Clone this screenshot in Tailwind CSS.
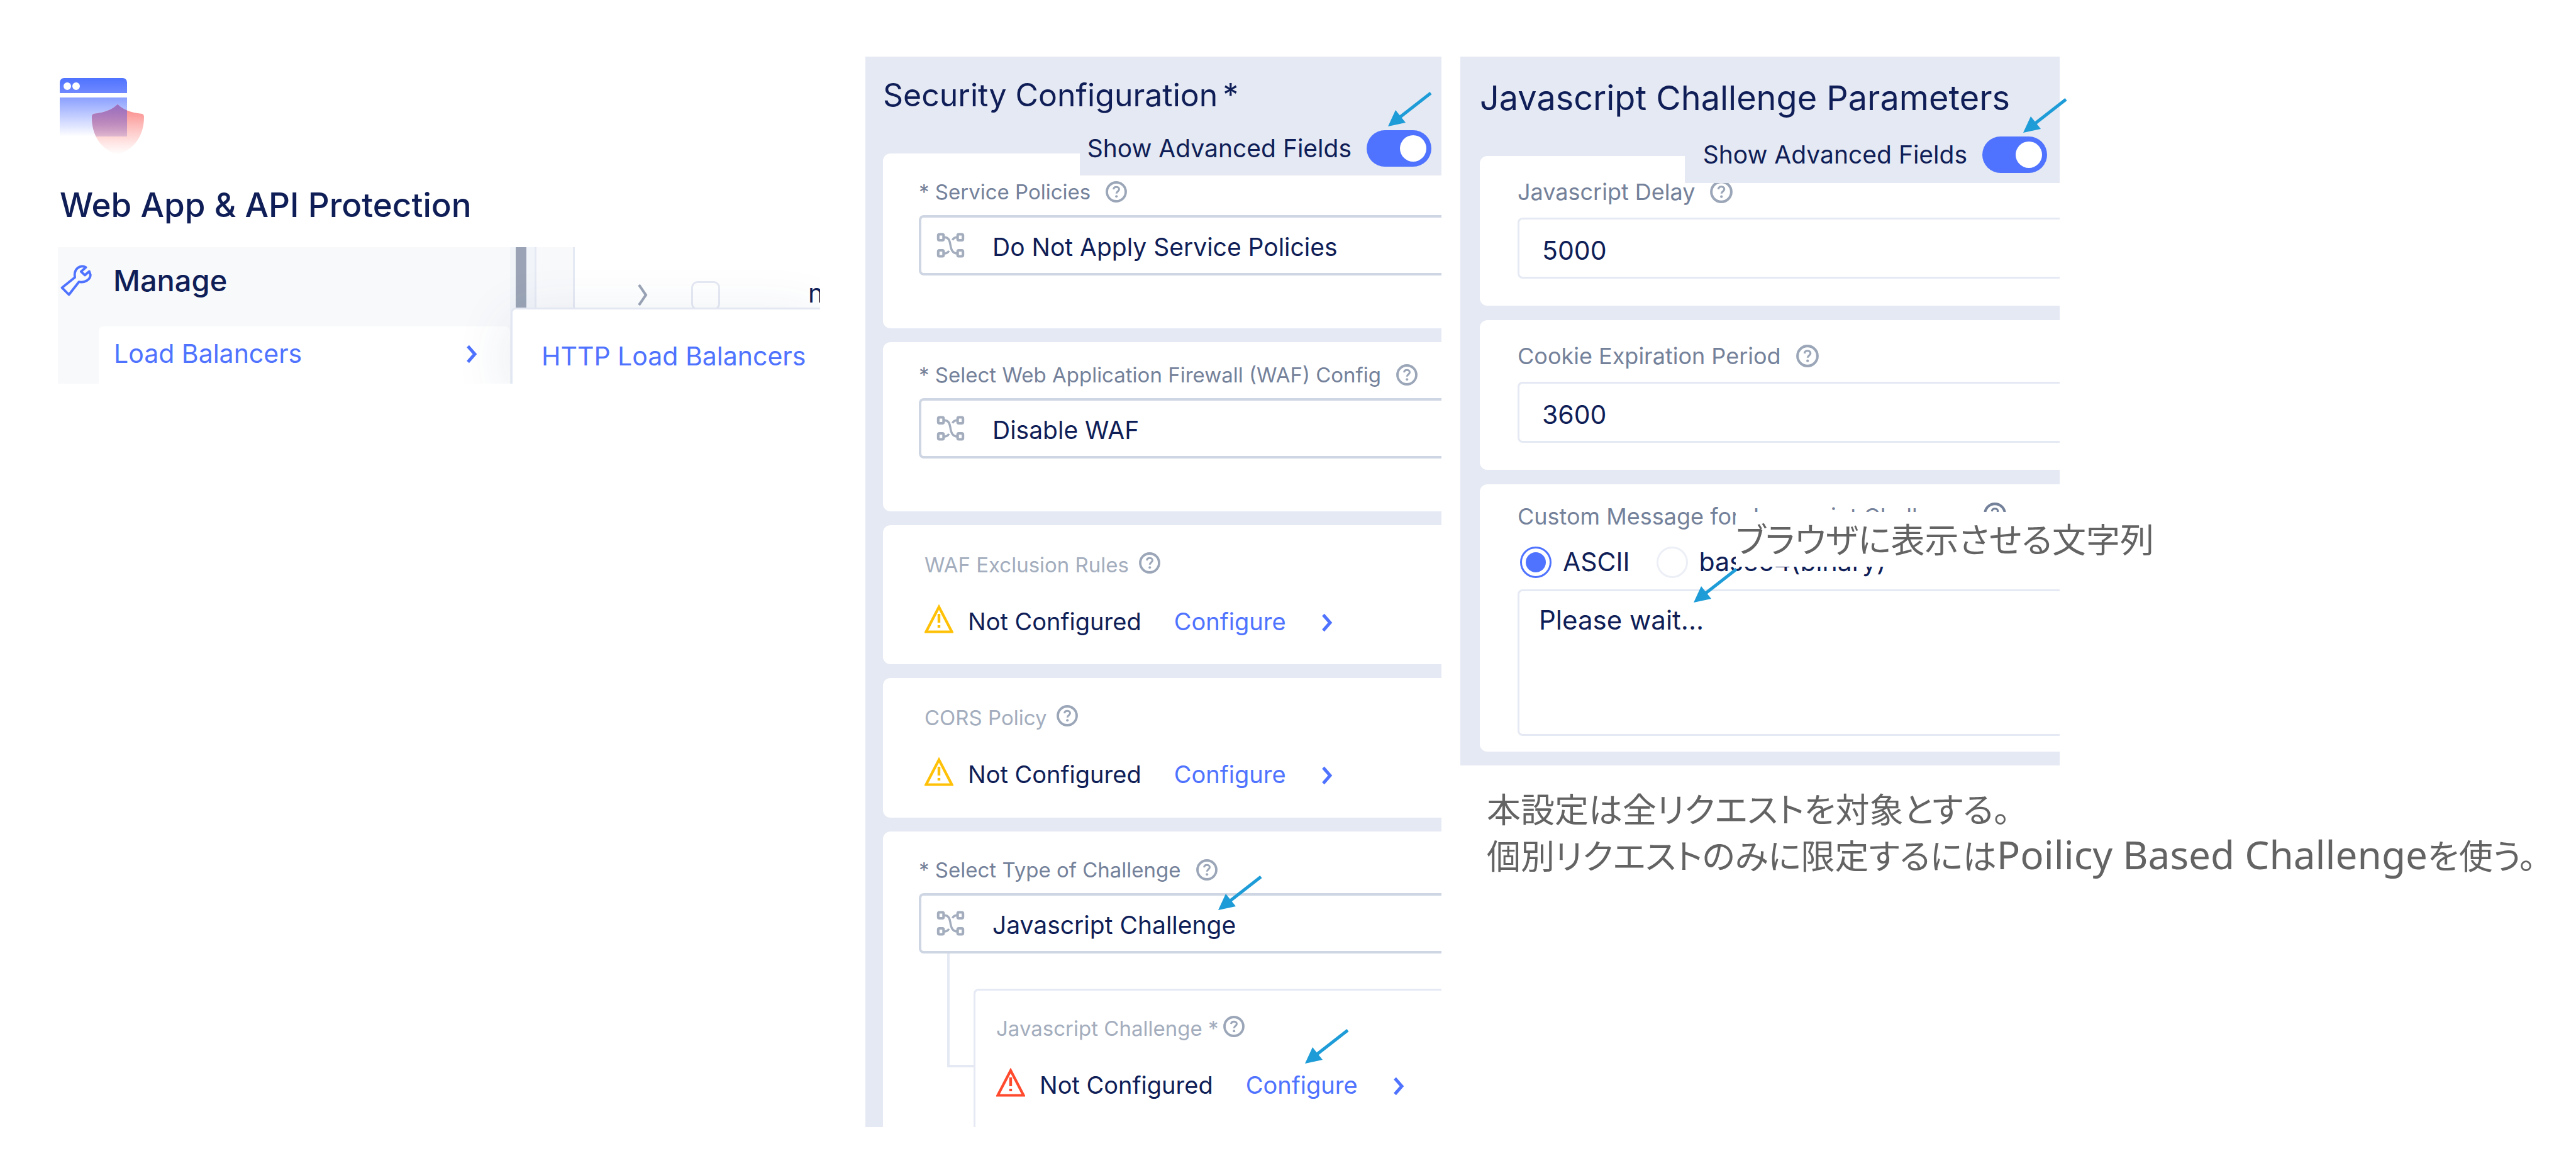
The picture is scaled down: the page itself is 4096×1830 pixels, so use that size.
<!DOCTYPE html>
<html lang="ja">
<head>
<meta charset="utf-8">
<meta name="viewport" content="width=device-width, initial-scale=1">
<title>Web App &amp; API Protection</title>
<script src="https://cdn.jsdelivr.net/npm/@tailwindcss/browser@4"></script>
</head>
<body class="bg-white font-['Inter','Noto_Sans_CJK_JP',sans-serif] text-[#0f1e57]">

<svg class="hidden" aria-hidden="true">
  <symbol id="help" viewBox="0 0 34 34">
    <circle cx="17" cy="17" r="15" fill="none" stroke="currentColor" stroke-width="3.8"/>
    <path d="M12.5 13.2c.3-2.700 2.100-4 4.500-4s4.500 1.500 4.500 3.900c0 3-4.300 3.300-4.300 6.600" fill="none" stroke="currentColor" stroke-width="3"/>
    <circle cx="17.200" cy="24.300" r="2" fill="currentColor"/>
  </symbol>
  <symbol id="branch" viewBox="100 295 143 127">
    <g fill="none" stroke="currentColor" stroke-width="13">
      <rect x="109" y="303" width="27" height="30" rx="6"/>
      <rect x="207" y="303" width="27" height="30" rx="6"/>
      <rect x="109" y="384" width="27" height="30" rx="6"/>
      <rect x="207" y="384" width="27" height="30" rx="6"/>
      <path stroke-width="11" d="M138 318c22 0 28 12 32 36 4 26 10 45 36 46M206 318c-12 0-20 4-25 14M138 400c12 0 20-4 25-14"/>
    </g>
  </symbol>
  <symbol id="warn" viewBox="0 0 46 46">
    <path d="M23 4 43.500 43.500H2.500Z" fill="none" stroke="currentColor" stroke-width="4.200"/>
    <path d="M23 15v14M23 33v4" stroke="currentColor" stroke-width="4.400"/>
  </symbol>
  <symbol id="chevron" viewBox="0 0 18 30">
    <path d="M3 2.500 14 15 3 27.500" fill="none" stroke="currentColor" stroke-width="5"/>
  </symbol>
  <symbol id="arrow" viewBox="0 0 70 56">
    <path d="M68 2 18 41" stroke="#1e9cd7" stroke-width="5"/>
    <path d="M0 55 12 29 28 49Z" fill="#1e9cd7"/>
  </symbol>
</svg>

<main class="grid min-h-screen grid-cols-[1376fr_946fr_1774fr] items-start pt-[90px]">

  <!-- Navigation -->
  <section class="min-w-0 pt-[34px] pr-[72px] pl-[92px]">
    <svg class="ml-[3px] h-[124px] w-[136px]" viewBox="0 0 136 124" role="img" aria-label="Web App and API Protection">
      <defs>
        <linearGradient id="bar" x1="0" y1="0" x2="0" y2="1"><stop stop-color="#4f73ff"/><stop offset="1" stop-color="#7089ff"/></linearGradient>
        <linearGradient id="page" x1="0" y1="0" x2="0" y2="1"><stop stop-color="#8ba0ff"/><stop offset="1" stop-color="#8ba0ff" stop-opacity="0"/></linearGradient>
        <linearGradient id="red" x1="0" y1="0" x2="0" y2="1"><stop stop-color="#f87272" stop-opacity=".9"/><stop offset="1" stop-color="#ff8d86" stop-opacity="0"/></linearGradient>
        <linearGradient id="mix" x1="0" y1="0" x2="0" y2="1"><stop stop-color="#9470c4"/><stop offset="1" stop-color="#b98bc4" stop-opacity="0"/></linearGradient>
        <clipPath id="pageclip"><path d="M0 31h107v62H0z"/></clipPath>
      </defs>
      <path d="M0 24V7a7 7 0 0 1 7-7h93a7 7 0 0 1 7 7v17z" fill="url(#bar)"/>
      <circle cx="12" cy="13" r="6" fill="#fff"/><circle cx="26" cy="13" r="6" fill="#fff"/>
      <path d="M0 31h107v62H0z" fill="url(#page)"/>
      <path d="M92 42c8 8 20 13 39 15q3 1 3 5c0 28-14 51-42 60C64 113 51 90 51 62q0-4 3-5c18-2 30-7 38-15z" fill="url(#red)"/>
      <path clip-path="url(#pageclip)" d="M92 42c8 8 20 13 39 15q3 1 3 5c0 28-14 51-42 60C64 113 51 90 51 62q0-4 3-5c18-2 30-7 38-15z" fill="url(#mix)"/>
    </svg>
    <h1 class="mt-[46px] pl-[3px] text-[53px] leading-[64px] font-medium whitespace-nowrap">Web App &amp; API Protection</h1>

    <div class="relative mt-[35px] flex h-[217px] overflow-hidden">
      <nav class="flex w-[719px] shrink-0 flex-col bg-[#f8f9fb]" aria-label="Manage">
        <div class="flex h-[106px] items-center pl-1">
          <svg class="size-[50px] text-[#4f73ff]" viewBox="35 32 158 158" aria-hidden="true">
            <path d="M43 147 78 182 128 118C160 124 187 104 186 82L180 65 158 84 139 66 163 45C140 30 100 48 108 95Z" fill="none" stroke="currentColor" stroke-width="12" stroke-linejoin="round"/>
          </svg>
          <span class="ml-[34px] text-[47px] leading-[56px] font-medium">Manage</span>
        </div>
        <a href="#load-balancers" class="mt-5 ml-[65px] flex h-[91px] items-center justify-between rounded-tl-lg rounded-tr-lg bg-white pr-[52px] pb-1 pl-6 text-[41px] text-[#4f73ff]">
          <span>Load Balancers</span>
          <svg class="h-[30px] w-[18px]" aria-hidden="true"><use href="#chevron"/></svg>
        </a>
      </nav>
      <div class="flex h-full min-w-0 flex-1 bg-[#f1f4f9]">
        <div class="ml-[9px] h-full w-[17px] shrink-0 bg-[#9ba4b6]"></div>
        <div class="ml-[13px] h-full w-[64px] shrink-0 border-x-[3px] border-[#e5e9f3] bg-[#f8f9fb]"></div>
        <div class="flex h-full min-w-0 flex-1 items-start overflow-hidden bg-white pt-[54px] pl-[99px]">
          <svg class="mt-1 h-[36px] w-[18px] shrink-0 text-[#9ba4b6]" viewBox="0 0 18 36" aria-hidden="true"><path d="M3 2 14 18 3 34" fill="none" stroke="currentColor" stroke-width="4"/></svg>
          <input type="checkbox" aria-label="Select row" class="ml-[68px] size-[46px] shrink-0 appearance-none rounded-[10px] border-[3px] border-[#e5e9f3] bg-white">
          <span class="ml-[140px] text-[41px] leading-[38px]">n</span>
        </div>
      </div>
      <div class="absolute top-[96px] right-0 bottom-0 left-[720px] rounded-tl-lg border-t-[3px] border-l-[3px] border-[#e2e7f2] bg-white pt-[49px] pl-[46px] shadow-[0_20px_90px_rgba(40,70,120,0.12)]">
        <a href="#http-load-balancers" class="text-[41px] leading-[50px] whitespace-nowrap text-[#4f73ff]">HTTP Load Balancers</a>
      </div>
    </div>
  </section>

  <!-- Security configuration -->
  <section class="min-w-0 pr-[30px]">
    <div class="relative overflow-hidden bg-[#e5e9f3]">
      <h2 class="h-[154px] pt-[31px] pl-[28px] text-[50px] leading-[60px] whitespace-nowrap">Security Configuration<span class="ml-2">*</span></h2>

      <div class="absolute top-[103px] right-0 flex h-[86px] w-[575px] items-center justify-end gap-6 bg-[#e5e9f3] pr-4">
        <label for="adv1" class="text-[39px] whitespace-nowrap">Show Advanced Fields</label>
        <input id="adv1" type="checkbox" role="switch" checked class="flex h-[58px] w-[103px] shrink-0 appearance-none items-center justify-end rounded-full bg-[#4f73ff] pr-2 before:size-[42px] before:rounded-full before:bg-white before:content-['']">
      </div>
      <svg class="absolute top-[56px] right-[15px] h-[56px] w-[70px]" aria-hidden="true"><use href="#arrow"/></svg>

      <div class="ml-[28px] flex flex-col gap-[22px]">
        <div class="rounded-l-xl bg-white pt-[41px] pb-[84px] pl-[57px]">
          <div class="flex items-center gap-6 text-[33px] leading-[40px] text-[#74819a]">
            <label for="policies">* Service Policies</label>
            <svg class="size-[34px] text-[#9ba6b8]" aria-hidden="true"><use href="#help"/></svg>
          </div>
          <div class="mt-[17px] flex h-[96px] items-center rounded-l-lg border-4 border-r-0 border-[#ced5e3] pl-6">
            <svg class="h-[40px] w-[45px] shrink-0 text-[#a3adbd]" aria-hidden="true"><use href="#branch"/></svg>
            <select id="policies" class="ml-[44px] h-full flex-1 appearance-none bg-transparent pt-[6px] text-[39px]"><option>Do Not Apply Service Policies</option></select>
          </div>
        </div>

        <div class="rounded-l-xl bg-white pt-[32px] pb-[84px] pl-[57px]">
          <div class="flex items-center gap-6 text-[33px] leading-[40px] whitespace-nowrap text-[#74819a]">
            <label for="waf">* Select Web Application Firewall (WAF) Config</label>
            <svg class="size-[34px] shrink-0 text-[#9ba6b8]" aria-hidden="true"><use href="#help"/></svg>
          </div>
          <div class="mt-[17px] flex h-[96px] items-center rounded-l-lg border-4 border-r-0 border-[#ced5e3] pl-6">
            <svg class="h-[40px] w-[45px] shrink-0 text-[#a3adbd]" aria-hidden="true"><use href="#branch"/></svg>
            <select id="waf" class="ml-[44px] h-full flex-1 appearance-none bg-transparent pt-[6px] text-[39px]"><option>Disable WAF</option></select>
          </div>
        </div>

        <div class="rounded-l-xl bg-white pt-[43px] pb-[44px] pl-[66px]">
          <div class="flex items-start gap-4 text-[33px] leading-[40px] text-[#a3adbd]">
            <h3>WAF Exclusion Rules</h3>
            <svg class="size-[34px] text-[#9ba6b8]" aria-hidden="true"><use href="#help"/></svg>
          </div>
          <div class="mt-[46px] flex h-[48px] items-center text-[38px]">
            <svg class="mb-2 size-[46px] text-[#ffc107]" aria-hidden="true"><use href="#warn"/></svg>
            <span class="ml-[23px]">Not Configured</span>
            <button type="button" class="ml-[52px] flex items-center gap-[56px] text-[#4f73ff]">Configure<svg class="mt-1 h-[30px] w-[18px]" aria-hidden="true"><use href="#chevron"/></svg></button>
          </div>
        </div>

        <div class="rounded-l-xl bg-white pt-[43px] pb-[45px] pl-[66px]">
          <div class="flex items-start gap-4 text-[33px] leading-[40px] text-[#a3adbd]">
            <h3>CORS Policy</h3>
            <svg class="size-[34px] text-[#9ba6b8]" aria-hidden="true"><use href="#help"/></svg>
          </div>
          <div class="mt-[46px] flex h-[48px] items-center text-[38px]">
            <svg class="mb-2 size-[46px] text-[#ffc107]" aria-hidden="true"><use href="#warn"/></svg>
            <span class="ml-[23px]">Not Configured</span>
            <button type="button" class="ml-[52px] flex items-center gap-[56px] text-[#4f73ff]">Configure<svg class="mt-1 h-[30px] w-[18px]" aria-hidden="true"><use href="#chevron"/></svg></button>
          </div>
        </div>

        <div class="rounded-tl-xl bg-white pt-[41px] pl-[57px]">
          <div class="flex items-center gap-6 text-[33px] leading-[40px] text-[#74819a]">
            <label for="challenge">* Select Type of Challenge</label>
            <svg class="size-[34px] text-[#9ba6b8]" aria-hidden="true"><use href="#help"/></svg>
          </div>
          <div class="relative mt-[17px] flex h-[96px] items-center rounded-l-lg border-4 border-r-0 border-[#ced5e3] pl-6">
            <svg class="h-[40px] w-[45px] shrink-0 text-[#a3adbd]" aria-hidden="true"><use href="#branch"/></svg>
            <select id="challenge" class="ml-[44px] h-full flex-1 appearance-none bg-transparent pt-[6px] text-[39px]"><option>Javascript Challenge</option></select>
            <svg class="absolute top-[-32px] left-[472px] h-[56px] w-[70px]" aria-hidden="true"><use href="#arrow"/></svg>
          </div>
          <div class="flex items-start">
            <div class="ml-[45px] h-[181px] w-[42px] shrink-0 border-b-4 border-l-4 border-[#e5e9f3]"></div>
            <div class="mt-[56px] flex-1 rounded-tl-lg border-t-[3px] border-l-[3px] border-[#e5e9f3] pt-[40px] pb-[43px] pl-[33px]">
              <div class="flex items-start gap-2 text-[33px] leading-[40px] text-[#a3adbd]">
                <h3>Javascript Challenge *</h3>
                <svg class="size-[34px] text-[#9ba6b8]" aria-hidden="true"><use href="#help"/></svg>
              </div>
              <div class="relative mt-[46px] flex h-[48px] items-center text-[38px]">
                <svg class="mb-2 size-[46px] text-[#ff4a2e]" aria-hidden="true"><use href="#warn"/></svg>
                <span class="ml-[23px]">Not Configured</span>
                <button type="button" class="ml-[52px] flex items-center gap-[56px] text-[#4f73ff]">Configure<svg class="mt-1 h-[30px] w-[18px]" aria-hidden="true"><use href="#chevron"/></svg></button>
                <svg class="absolute top-[-65px] left-[491px] h-[56px] w-[70px]" aria-hidden="true"><use href="#arrow"/></svg>
              </div>
            </div>
          </div>
        </div>
      </div>
    </div>
  </section>

  <!-- Javascript challenge parameters -->
  <section class="min-w-0">
    <div class="grid grid-cols-[953fr_821fr]">
      <div class="relative bg-[#e5e9f3] pb-[22px]">
        <h2 class="h-[158px] pt-[36px] pl-[31px] text-[54px] leading-[60px] whitespace-nowrap">Javascript Challenge Parameters</h2>

        <div class="ml-[31px] flex flex-col gap-[23px]">
          <div class="rounded-l-xl bg-white pt-[35px] pb-[43px] pl-[60px]">
            <div class="flex items-center gap-6 text-[36px] leading-[44px] text-[#74819a]">
              <label for="delay">Javascript Delay</label>
              <svg class="size-[36px] text-[#9ba6b8]" aria-hidden="true"><use href="#help"/></svg>
            </div>
            <input id="delay" type="text" value="5000" class="mt-[19px] block h-[97px] w-full rounded-l-lg border-[3px] border-r-0 border-[#e5e9f3] pt-[6px] pl-[36px] text-[41px]">
          </div>

          <div class="rounded-l-xl bg-white pt-[35px] pb-[43px] pl-[60px]">
            <div class="flex items-center gap-6 text-[36px] leading-[44px] text-[#74819a]">
              <label for="cookie">Cookie Expiration Period</label>
              <svg class="size-[36px] text-[#9ba6b8]" aria-hidden="true"><use href="#help"/></svg>
            </div>
            <input id="cookie" type="text" value="3600" class="mt-[19px] block h-[97px] w-full rounded-l-lg border-[3px] border-r-0 border-[#e5e9f3] pt-[6px] pl-[36px] text-[41px]">
          </div>

          <div class="rounded-l-xl bg-white pt-[29px] pb-[25px] pl-[60px]">
            <div class="flex items-start gap-5 text-[36px] leading-[44px] whitespace-nowrap text-[#74819a]">
              <label for="message">Custom Message for Javascript Challenge</label>
              <svg class="size-[36px] shrink-0 text-[#74819a]" aria-hidden="true"><use href="#help"/></svg>
            </div>
            <div class="mt-[26px] flex h-[50px] items-center pl-1 text-[41px]">
              <input id="ascii" type="radio" name="encoding" checked class="flex size-[50px] shrink-0 appearance-none items-center justify-center rounded-full border-[3px] border-[#4f73ff] before:size-[32px] before:rounded-full before:bg-[#4f73ff] before:content-['']">
              <label for="ascii" class="ml-[18px]">ASCII</label>
              <input id="b64" type="radio" name="encoding" class="ml-[42px] size-[50px] shrink-0 appearance-none rounded-full border-[3px] border-[#eceff6]">
              <label for="b64" class="ml-[18px]">base64(binary)</label>
            </div>
            <textarea id="message" class="mt-[18px] block h-[233px] w-full resize-none rounded-l-lg border-[3px] border-r-0 border-[#e5e9f3] pt-[21px] pl-[31px] text-[42px] leading-[50px]">Please wait...</textarea>
          </div>
        </div>

        <div class="absolute top-[111px] right-0 flex h-[90px] w-[596px] items-center justify-end gap-6 bg-[#e5e9f3] pr-5">
          <label for="adv2" class="text-[39px] whitespace-nowrap">Show Advanced Fields</label>
          <input id="adv2" type="checkbox" role="switch" checked class="flex h-[58px] w-[103px] shrink-0 appearance-none items-center justify-end rounded-full bg-[#4f73ff] pr-2 before:size-[42px] before:rounded-full before:bg-white before:content-['']">
        </div>
        <svg class="absolute top-[66px] right-[-12px] h-[56px] w-[70px]" aria-hidden="true"><use href="#arrow"/></svg>

        <p class="absolute top-[724px] left-[438px] h-[87px] bg-white pt-[5px] font-['Noto_Sans_CJK_JP',sans-serif] text-[54px] leading-[74px] whitespace-nowrap text-[#636363] [font-feature-settings:'palt']">ブラウザに表示させる文字列</p>
        <svg class="absolute top-[813px] left-[371px] h-[56px] w-[70px]" aria-hidden="true"><use href="#arrow"/></svg>
      </div>
    </div>

    <p class="mt-[31px] pl-[42px] font-['Noto_Sans_CJK_JP',sans-serif] text-[54px] leading-[74px] whitespace-nowrap text-[#636363] [font-feature-settings:'palt']">本設定は全リクエストを対象とする。<br>個別リクエストのみに限定するには<span class="font-['Noto_Sans',sans-serif] text-[62px] leading-none">Poilicy Based Challenge</span>を使う。</p>
  </section>
</main>
</body>
</html>
